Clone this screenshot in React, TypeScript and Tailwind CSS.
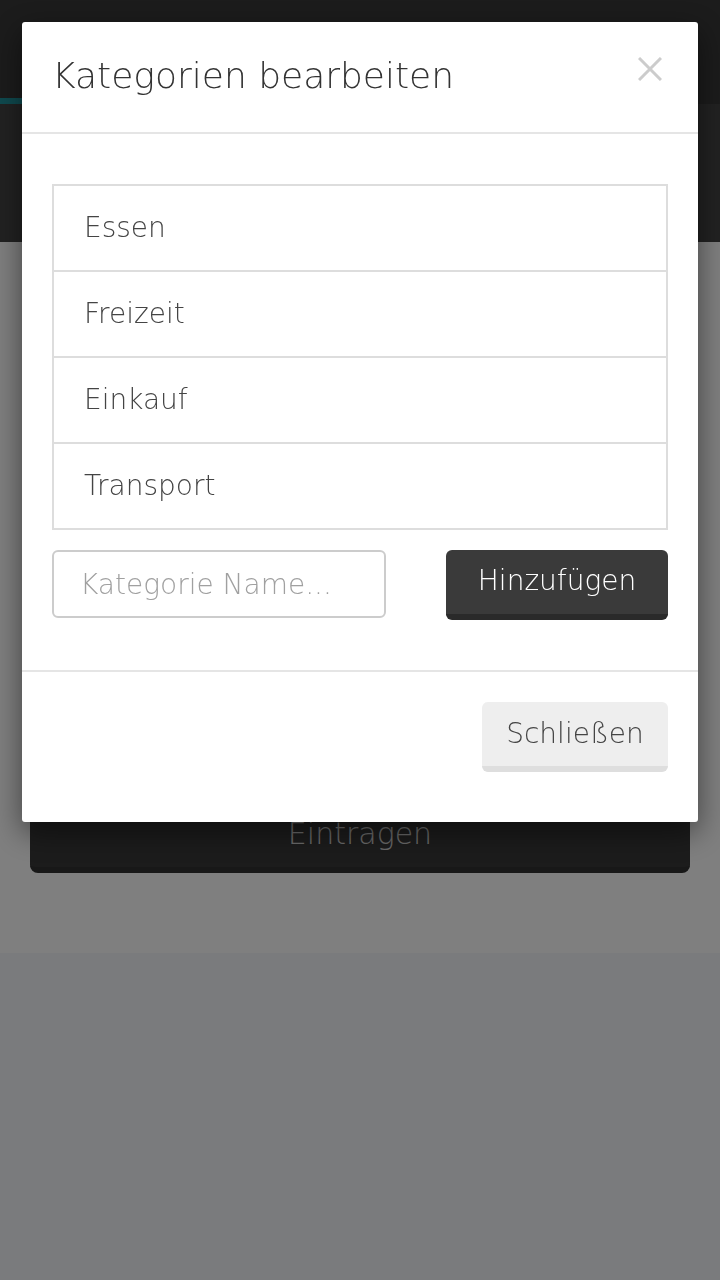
import React from "react"

const categories = ["Essen", "Freizeit", "Einkauf", "Transport"]

function CloseIcon() {
  return (
    <svg viewBox="0 0 24 24" className="h-[24px] w-[24px]" fill="none">
      <path d="M1 1 L23 23 M23 1 L1 23" stroke="#cccccc" strokeWidth="3" />
    </svg>
  )
}

export default function App() {
  return (
    <div
      className="relative min-h-[1280px] w-[720px] overflow-hidden font-extralight"
      style={{ fontFamily: '"DejaVu Sans ExtraLight", "DejaVu Sans", "Liberation Sans", sans-serif' }}
    >
      {/* page behind the dialog */}
      <header className="relative h-[104px] bg-[#383838]">
        <div className="absolute bottom-0 left-0 h-[6px] w-[240px] bg-[#1f949e]" />
      </header>
      <div className="h-[138px] bg-[#444444]" />
      <main className="flex h-[711px] flex-col justify-end bg-white px-[30px] pb-[80px]">
        <button className="h-[78px] w-full rounded-[8px] border-b-[6px] border-[#303030] bg-[#383838] pt-[4px] text-[30px] font-extralight text-[#d4d4d4]">
          Eintragen
        </button>
      </main>
      <div className="h-[327px] bg-[#f5f6fa]" />

      {/* dialog */}
      <div className="fixed inset-0 z-50 bg-black/50 px-[22px] pt-[22px]">
        <div className="overflow-hidden rounded-[3px] bg-white shadow-[0_10px_30px_rgba(0,0,0,0.5)]">
          <div className="flex h-[112px] items-start justify-between border-b-2 border-[#e5e5e5] pl-[30px] pr-[36px]">
            <h1 className="pt-[30px] text-[36px] font-extralight leading-[48px] text-[#333333]">
              Kategorien bearbeiten
            </h1>
            <button className="mt-[35px]">
              <CloseIcon />
            </button>
          </div>

          <div className="px-[30px] pt-[50px] pb-[50px]">
            <ul className="border-2 border-[#dddddd]">
              {categories.map((c, i) => (
                <li
                  key={c}
                  className={
                    "flex items-center px-[30px] text-[28px] font-extralight text-[#444444]" +
                    (i > 0 ? " h-[86px] border-t-2 border-[#dddddd]" : " h-[84px]")
                  }
                >
                  {c}
                </li>
              ))}
            </ul>

            <div className="mt-[20px] flex items-start justify-between">
              <input
                placeholder="Kategorie Name..."
                className="h-[68px] w-[334px] rounded-[6px] border-2 border-[#cccccc] px-[26px] text-[28px] font-extralight text-[#444444] placeholder:text-[#a0a0a0] outline-none"
              />
              <button className="h-[70px] w-[222px] rounded-[6px] border-b-[6px] border-[#2a2a2a] bg-[#3a3a3a] pb-[2px] text-[28px] font-extralight text-white">
                Hinzufügen
              </button>
            </div>
          </div>

          <div className="flex justify-end border-t-2 border-[#e5e5e5] px-[30px] pt-[30px] pb-[50px]">
            <button className="h-[70px] w-[186px] rounded-[6px] border-b-[6px] border-[#dedede] bg-[#eeeeee] text-[28px] font-extralight text-[#444444]">
              Schließen
            </button>
          </div>
        </div>
      </div>
    </div>
  )
}
